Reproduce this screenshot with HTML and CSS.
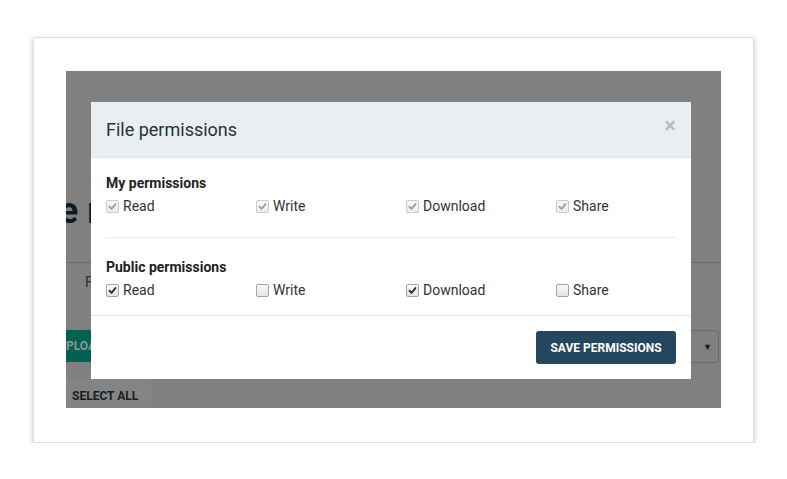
FILE: index.html
```
<!DOCTYPE html>
<html lang="en">
<head>
<meta charset="utf-8">
<title>File permissions</title>
<link rel="stylesheet" href="styles.css">
</head>
<body>
<div class="stage">
  <div class="card">
    <div class="frame">
      <div class="page">
        <h1 class="page-title">File manager</h1>
        <div class="tabs"><span class="tab">Files</span></div>
        <div class="toolbar">
          <button class="btn-upload">UPLOAD</button>
          <div class="select"><span class="select-arrow">&#9660;</span></div>
        </div>
        <button class="btn-select-all">SELECT ALL</button>
      </div>
      <div class="modal">
        <div class="modal-header">
          <h2 class="modal-title">File permissions</h2>
          <span class="close">&times;</span>
        </div>
        <div class="modal-body">
          <div class="perm-group">
            <div class="perm-title">My permissions</div>
            <div class="perm-row">
              <label class="perm"><span class="box disabled checked"><svg viewBox="0 0 13 13"><path d="M3 6.8 L5.4 9.2 L10 3.6"/></svg></span>Read</label>
              <label class="perm"><span class="box disabled checked"><svg viewBox="0 0 13 13"><path d="M3 6.8 L5.4 9.2 L10 3.6"/></svg></span>Write</label>
              <label class="perm"><span class="box disabled checked"><svg viewBox="0 0 13 13"><path d="M3 6.8 L5.4 9.2 L10 3.6"/></svg></span>Download</label>
              <label class="perm"><span class="box disabled checked"><svg viewBox="0 0 13 13"><path d="M3 6.8 L5.4 9.2 L10 3.6"/></svg></span>Share</label>
            </div>
          </div>
          <hr class="divider">
          <div class="perm-group">
            <div class="perm-title">Public permissions</div>
            <div class="perm-row">
              <label class="perm"><span class="box checked"><svg viewBox="0 0 13 13"><path d="M3 6.8 L5.4 9.2 L10 3.6"/></svg></span>Read</label>
              <label class="perm"><span class="box"></span>Write</label>
              <label class="perm"><span class="box checked"><svg viewBox="0 0 13 13"><path d="M3 6.8 L5.4 9.2 L10 3.6"/></svg></span>Download</label>
              <label class="perm"><span class="box"></span>Share</label>
            </div>
          </div>
        </div>
        <div class="modal-footer">
          <button class="btn-save">SAVE PERMISSIONS</button>
        </div>
      </div>
    </div>
  </div>
</div>
</body>
</html>
```
FILE: styles.css
```
* { box-sizing: border-box; }
html, body { margin: 0; padding: 0; background: #fff; }
body { font-family: Roboto, "Liberation Sans", sans-serif; }

.stage { padding: 37px 0 0 33px; }
.card {
  width: 721px;
  height: 406px;
  background: #fff;
  border: 1px solid #e0e0e0;
  box-shadow: 0 2px 5px rgba(0,0,0,0.24);
  padding: 33px 0 0 32px;
}
.frame {
  position: relative;
  width: 655px;
  height: 337px;
  overflow: hidden;
}
.page {
  width: 100%;
  height: 100%;
  background: #808080;
  display: flex;
  flex-direction: column;
}
.page-title {
  margin: 119px 0 0 -46px;
  font-size: 36px;
  line-height: 43px;
  font-weight: 700;
  color: #0e1a24;
  white-space: nowrap;
}
.tabs {
  margin-top: 29px;
  border-top: 1px solid #686868;
  padding-left: 19px;
  height: 38px;
  line-height: 38px;
}
.tab { font-size: 14px; color: #22323e; }
.toolbar {
  margin-top: 30px;
  display: flex;
  justify-content: space-between;
  align-items: flex-start;
  padding-right: 2px;
}
.btn-upload {
  margin-left: -23px;
  height: 32px;
  padding: 0 15px;
  border: 0;
  background: #006150;
  color: #8c9693;
  font-family: inherit;
  font-size: 12px;
  font-weight: 700;
}
.select {
  width: 220px;
  height: 33px;
  border: 1px solid #6a6a6a;
  border-radius: 3px;
  background: #808080;
  display: flex;
  justify-content: flex-end;
  align-items: center;
  padding-right: 6px;
}
.select-arrow { font-size: 9px; color: #141a20; }
.btn-select-all {
  align-self: flex-start;
  margin-top: 15px;
  height: 29px;
  padding: 6px 13px 0 6px;
  border: 0;
  background: #848484;
  color: #141e28;
  font-family: inherit;
  font-size: 12px;
  font-weight: 700;
  white-space: nowrap;
  text-align: left;
}
.modal {
  position: absolute;
  left: 25px;
  top: 31px;
  width: 600px;
  background: #fff;
}
.modal-header {
  height: 56px;
  background: #e9eff0;
  border-bottom: 1px solid #e3e6e7;
  padding: 0 15px;
  display: flex;
  align-items: center;
  justify-content: space-between;
}
.modal-title {
  margin: 0;
  font-size: 18px;
  font-weight: 400;
  color: #24313d;
}
.close {
  font-size: 22px;
  font-weight: 700;
  color: #b9bec0;
  line-height: 1;
  margin-bottom: 7px;
  margin-right: 0;
}
.modal-body { padding: 15px 15px 15px; }
.perm-title {
  font-size: 14px;
  font-weight: 700;
  color: #222;
  line-height: 20px;
}
.perm-row {
  margin-top: 3px;
  display: grid;
  grid-template-columns: 150px 150px 150px 1fr;
}
.perm {
  display: flex;
  align-items: center;
  font-size: 14px;
  line-height: 20px;
  color: #333;
}
.box {
  width: 13px;
  height: 13px;
  margin-right: 4px;
  border: 1px solid #a3a3a3;
  border-radius: 2px;
  background: linear-gradient(#fbfbfb, #e4e4e4);
  display: flex;
}
.box svg { width: 100%; height: 100%; }
.box path {
  fill: none;
  stroke: #2b2b2b;
  stroke-width: 2.2;
  stroke-linecap: round;
  stroke-linejoin: round;
}
.box.disabled {
  border-color: #cacaca;
  background: linear-gradient(#f7f7f7, #ececec);
}
.box.disabled path { stroke: #a0a0a0; }
.divider {
  margin: 21px 0 19px;
  border: 0;
  border-top: 1px solid #e9e9e9;
}
.modal-footer {
  border-top: 1px solid #e5e5e5;
  padding: 15px;
  display: flex;
  justify-content: flex-end;
}
.btn-save {
  height: 33px;
  width: 140px;
  padding: 0;
  border: 0;
  border-radius: 3px;
  background: #24465e;
  color: #fff;
  font-family: inherit;
  font-size: 12px;
  font-weight: 700;
}
```
